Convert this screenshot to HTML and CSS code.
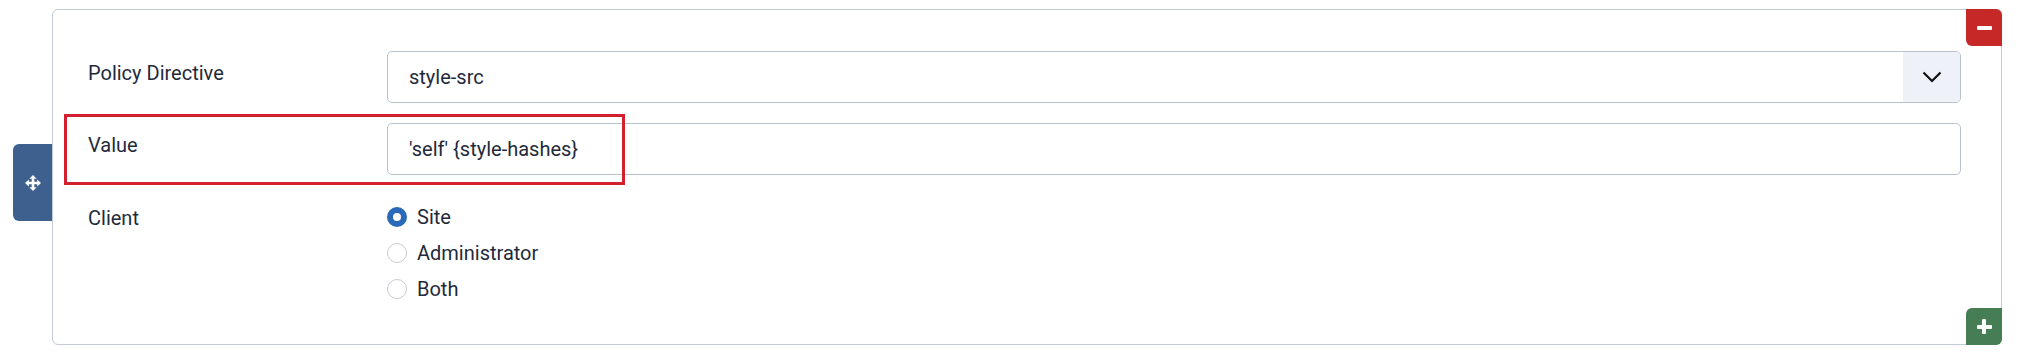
FILE: index.html
```html
<!DOCTYPE html>
<html lang="en">
<head>
<meta charset="utf-8">
<title>Subform row</title>
<link rel="stylesheet" href="styles.css">
</head>
<body>
<div class="page">
  <div class="handle" title="Move">
    <svg class="move-icon" viewBox="0 0 16 16" width="16" height="16" aria-hidden="true">
      <path fill="#fff" d="M8 0 L11.6 3.8 L9.3 3.8 L9.3 6.7 L12.2 6.7 L12.2 4.4 L16 8 L12.2 11.6 L12.2 9.3 L9.3 9.3 L9.3 12.2 L11.6 12.2 L8 16 L4.4 12.2 L6.7 12.2 L6.7 9.3 L3.8 9.3 L3.8 11.6 L0 8 L3.8 4.4 L3.8 6.7 L6.7 6.7 L6.7 3.8 L4.4 3.8 Z"/>
    </svg>
  </div>
  <div class="card">
    <button class="btn-remove" type="button" aria-label="Remove"><span class="bar"></span></button>

    <div class="row">
      <label class="label">Policy Directive</label>
      <div class="control">
        <div class="select">
          <span class="select-value">style-src</span>
          <span class="select-arrow">
            <svg viewBox="0 0 20 12" width="20" height="12" aria-hidden="true">
              <path d="M1.5 1.5 L10 10 L18.5 1.5" fill="none" stroke="#111" stroke-width="2.2"/>
            </svg>
          </span>
        </div>
      </div>
    </div>

    <div class="row">
      <label class="label">Value</label>
      <div class="control">
        <div class="input">'self' {style-hashes}</div>
      </div>
    </div>

    <div class="row row-radios">
      <label class="label">Client</label>
      <div class="control radios">
        <div class="radio"><span class="dot checked"></span><span>Site</span></div>
        <div class="radio"><span class="dot"></span><span>Administrator</span></div>
        <div class="radio"><span class="dot"></span><span>Both</span></div>
      </div>
    </div>

    <div class="highlight"></div>
    <button class="btn-add" type="button" aria-label="Add"><span class="plus"></span></button>
  </div>
</div>
</body>
</html>
```

FILE: styles.css
```css
* { box-sizing: border-box; }

html, body {
  margin: 0;
  padding: 0;
  background: #fff;
}

body {
  font-family: Roboto, "Liberation Sans", Arial, sans-serif;
  font-size: 20px;
  line-height: 1.5;
  color: #1f2a3b;
}

.page {
  position: relative;
  padding: 9px 17px 16px 52px;
}

.handle {
  position: absolute;
  left: 13px;
  top: 144px;
  width: 39px;
  height: 77px;
  background: #3e608e;
  border-radius: 6px 0 0 6px;
  display: flex;
  align-items: center;
  justify-content: center;
}

.move-icon { display: block; }

.card {
  position: relative;
  border: 1px solid #c3cbd6;
  border-radius: 6px;
  padding: 41px 40px 40px 35px;
  display: flex;
  flex-direction: column;
  gap: 20px;
}

.row {
  display: grid;
  grid-template-columns: 299px 1fr;
}

.row-radios { margin-top: 1px; }

.label {
  padding-top: 7px;
  line-height: 30px;
}

.select,
.input {
  height: 52px;
  border: 1px solid #b8c2cf;
  border-radius: 5px;
  background: #fff;
}

.select {
  display: flex;
  align-items: stretch;
  overflow: hidden;
}

.select-value {
  flex: 1;
  display: flex;
  align-items: center;
  padding-left: 21px;
}

.select-arrow {
  width: 57px;
  background: #eef2f8;
  display: flex;
  align-items: center;
  justify-content: center;
}

.select-arrow svg { display: block; }

.input {
  display: flex;
  align-items: center;
  padding-left: 21px;
}

.radios {
  padding-top: 6px;
  display: flex;
  flex-direction: column;
  gap: 6px;
}

.radio {
  height: 30px;
  display: flex;
  align-items: center;
  gap: 10px;
}

.dot {
  width: 20px;
  height: 20px;
  border-radius: 50%;
  border: 1px solid #c5cbd3;
  background: #fff;
  flex: none;
}

.dot.checked {
  border: 6px solid #2a69b8;
}

.highlight {
  position: absolute;
  left: 11px;
  top: 104px;
  width: 561px;
  height: 71px;
  border: 3px solid #d2202f;
  pointer-events: none;
}

.btn-remove,
.btn-add {
  position: absolute;
  right: -1px;
  width: 36px;
  height: 37px;
  border: 0;
  padding: 0;
  display: flex;
  align-items: center;
  justify-content: center;
  cursor: pointer;
}

.btn-remove {
  top: -1px;
  background: #c62828;
  border-radius: 0 6px 0 6px;
}

.btn-remove .bar {
  width: 15px;
  height: 4px;
  background: #fff;
  border-radius: 1px;
}

.btn-add {
  bottom: -1px;
  background: #467d55;
  border-radius: 6px 0 6px 0;
}

.btn-add .plus {
  position: relative;
  width: 15px;
  height: 15px;
}

.btn-add .plus::before,
.btn-add .plus::after {
  content: "";
  position: absolute;
  background: #fff;
  border-radius: 1px;
}

.btn-add .plus::before {
  left: 0;
  top: 5.5px;
  width: 15px;
  height: 4px;
}

.btn-add .plus::after {
  left: 5.5px;
  top: 0;
  width: 4px;
  height: 15px;
}
```
